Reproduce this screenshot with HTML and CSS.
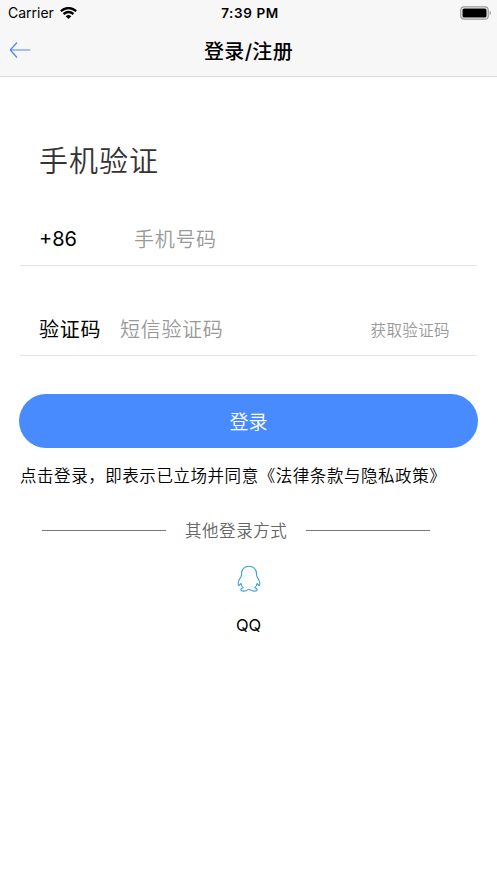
FILE: index.html
```html
<!DOCTYPE html>
<html lang="zh-CN">
<head>
<meta charset="utf-8">
<title>登录/注册</title>
<link rel="stylesheet" href="styles.css">
</head>
<body>
<header class="top">
  <div class="status">
    <div class="carrier"><span>Carrier</span>
      <svg class="wifi" viewBox="0 0 17 12"><path d="M.8 4.100Q8.500-2 16.200 4.100M3.500 7Q8.500 3 13.500 7" fill="none" stroke="#000" stroke-width="2.300"/><path d="M5.700 9.200Q8.500 7 11.300 9.200L8.500 12Z"/></svg>
    </div>
    <div class="time">7:39 PM</div>
    <svg class="battery" viewBox="0 0 32 14"><rect x=".8" y=".8" width="27.4" height="12.4" rx="3.2" fill="none" stroke="#999" stroke-width="1.2"/><rect x="2.5" y="2.5" width="24" height="9" rx="1.5"/><path d="M29.700 4.800Q32 7 29.700 9.200Z" fill="#888"/></svg>
  </div>
  <nav class="nav">
    <svg class="back" viewBox="0 0 22 18"><path d="M21.300 9H1.300M8 1.500L1.300 9L8 16.500" fill="none" stroke="#4a88f5" stroke-width="1.200" stroke-linejoin="round"/></svg>
    <h1>登录/注册</h1>
  </nav>
</header>
<main>
  <h2>手机验证</h2>
  <div class="field phone"><span class="code">+86</span><span class="hint">手机号码</span></div>
  <div class="field verify"><span class="label">验证码</span><span class="hint">短信验证码</span><span class="send">获取验证码</span></div>
  <div class="login">登录</div>
  <p class="terms">点击登录，即表示已立场并同意《法律条款与隐私政策》</p>
  <div class="other"><i></i><span>其他登录方式</span><i></i></div>
  <div class="qq">
    <svg viewBox="0 0 24 28"><path d="M12 1.2C7.200 1.200 4.500 4.700 4.500 9C4.500 10.200 4.300 11.200 3.700 12.100C2 14.500 1 17 1.200 19.200C1.300 20.600 1.800 20.700 2.500 20L4 18.500C4.200 20.300 5 21.600 6.200 22.700C4.400 23.300 3.600 24 3.800 24.900C4.100 26.500 8.600 26.600 10.500 24.900Q12 24.200 13.500 24.900C15.400 26.600 19.900 26.500 20.200 24.900C20.400 24 19.600 23.300 17.800 22.700C19 21.600 19.800 20.300 20 18.500L21.500 20C22.200 20.700 22.700 20.600 22.800 19.200C23 17 22 14.500 20.300 12.100C19.700 11.200 19.500 10.200 19.500 9C19.500 4.700 16.800 1.200 12 1.200Z" fill="none" stroke="#3aa0dc" stroke-width="1.100" stroke-linejoin="round"/></svg>
    <span>QQ</span>
  </div>
</main>
</body>
</html>
```
FILE: styles.css
```css
* { box-sizing: border-box; margin: 0; padding: 0; }
body { background: #fff; color: #000; font-family: Inter, "Noto Sans CJK SC", sans-serif; white-space: nowrap; }
svg { display: block; }
.top { height: 77px; background: #f7f7f7; border-bottom: 1px solid #d9d9d9; }
.status { display: grid; grid-template-columns: 1fr auto 1fr; height: 25px; padding: 0 5px 0 8px; align-items: center; }
.carrier { display: flex; align-items: center; gap: 6px; font-size: 14px; letter-spacing: 0; }
.wifi { width: 17px; height: 12px; }
.time { font-size: 13.5px; font-weight: 600; letter-spacing: .6px; }
.battery { width: 32px; height: 14px; justify-self: end; }
.nav { display: grid; grid-template-columns: 22px 1fr 22px; align-items: center; height: 50px; padding: 0 9px; }
.back { width: 22px; height: 18px; }
.nav h1 { padding-top: 3px; text-align: center; font-size: 20px; line-height: 30px; font-weight: 500; letter-spacing: .3px; }
main { padding: 62px 20px 0; }
h2 { padding-left: 19px; height: 46px; line-height: 46px; font-size: 29px; font-weight: 350; letter-spacing: 1px; color: #333; }
.field { display: flex; align-items: center; border-bottom: 1px solid #e4e4e4; padding: 0 27px 0 19px; font-size: 20px; letter-spacing: .7px; }
.phone { margin-top: 28px; height: 53px; }
.verify { margin-top: 37px; height: 53px; }
.code { width: 95px; letter-spacing: 0; }
.label { width: 81px; }
.label, .hint, .send { padding-bottom: 1px; }
.hint { color: #999; font-weight: 350; }
.send { margin-left: auto; font-size: 15.500px; letter-spacing: .4px; color: #999; font-weight: 350; }
.login { margin: 38px -1px 0; height: 54px; border-radius: 27px; background: #488bff; color: #fff; text-align: center; font-size: 19px; font-weight: 350; line-height: 57px; }
.terms { margin-top: 15px; font-size: 16.500px; line-height: 26px; letter-spacing: .55px; font-weight: 350; }
.other { display: flex; align-items: center; gap: 19px; margin: 28px 0 0 22px; height: 26px; color: #666; font-size: 16.500px; letter-spacing: .55px; font-weight: 350; }
.other i { width: 124px; height: 1px; background: #777; }
.qq { display: flex; flex-direction: column; align-items: center; margin-top: 22px; }
.qq svg { width: 24px; height: 28px; }
.qq span { margin-top: 20px; font-size: 16.500px; line-height: 24px; }
```
